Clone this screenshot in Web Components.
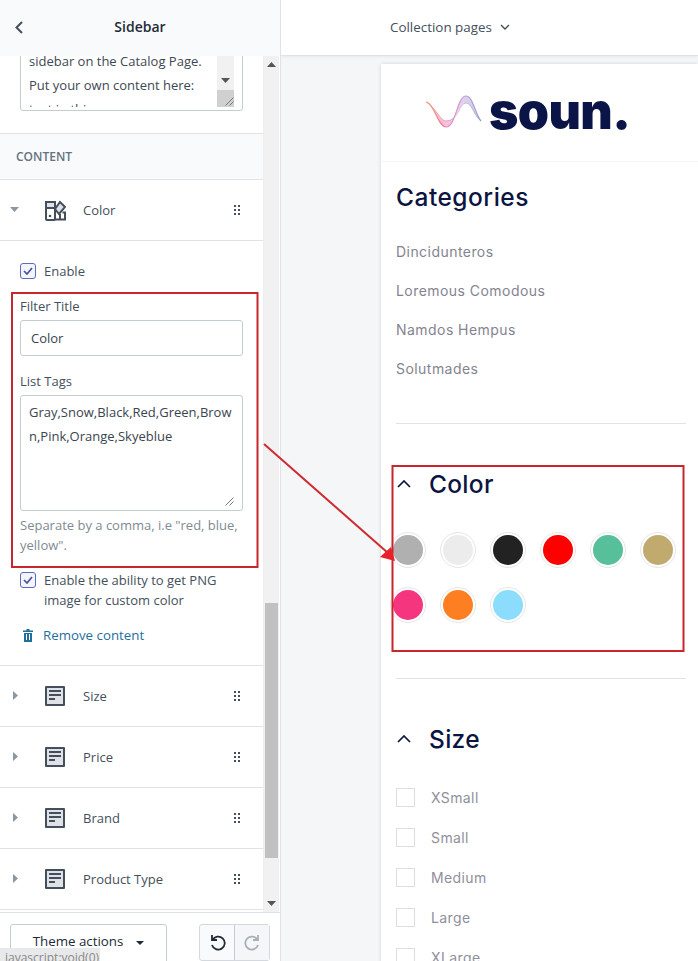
<!DOCTYPE html>
<html>
<head>
<meta charset="utf-8">
<title>Sidebar</title>
<style>
  html, body { margin: 0; height: 100%; overflow: hidden; background: #fff; }
  body { font-family: "Open Sans", "Liberation Sans", sans-serif; }
</style>
</head>
<body>
<editor-app></editor-app>

<script>
const dragDots = `<svg width="8" height="10" viewBox="0 0 8 10" fill="#454f5b">
  <rect x="1" y="0" width="2" height="2"/><rect x="5" y="0" width="2" height="2"/>
  <rect x="1" y="4" width="2" height="2"/><rect x="5" y="4" width="2" height="2"/>
  <rect x="1" y="8" width="2" height="2"/><rect x="5" y="8" width="2" height="2"/>
</svg>`;

const icons = {
  text: `<svg width="20" height="20" viewBox="0 0 20 20">
    <rect x="0" y="0" width="20" height="20" rx="1" fill="#454f5b"/>
    <rect x="2" y="2" width="16" height="16" fill="#dfe3e8"/>
    <rect x="4" y="4" width="12" height="2" fill="#454f5b"/>
    <rect x="4" y="8" width="12" height="2" fill="#454f5b"/>
    <rect x="4" y="12" width="6" height="2" fill="#454f5b"/>
  </svg>`,
  color: `<svg width="21" height="21" viewBox="0 0 21 21" fill="none" stroke="#454f5b" stroke-width="2">
    <path d="M1 2h9v6H1z" fill="#dfe3e8"/>
    <path d="M1 8v11a1 1 0 0 0 1 1h7a1 1 0 0 0 1-1V8"/>
    <path d="M10 9l5-7 5 5-6 7z" fill="#dfe3e8"/>
    <path d="M10 19.500h10v-7h-2.500"/>
    <path d="M15 19v-5" />
    <circle cx="5" cy="16" r="1.300" fill="#454f5b" stroke="none"/>
  </svg>`
};

// one collapsible row of the section list
class SectionRow extends HTMLElement {
  constructor() {
    super();
    this.attachShadow({ mode: 'open' });
  }

  connectedCallback() {
    const open = this.hasAttribute('open');
    const icon = icons[this.getAttribute('icon') || 'text'];
    const caret = open
      ? '<path d="M0 2h9L4.500 7z"/>'
      : '<path d="M3 0l5 4.500L3 9z"/>';
    this.shadowRoot.innerHTML = `
      <style>
        :host {
          display: flex;
          align-items: center;
          height: 60px;
          border-bottom: 1px solid #dfe3e8;
          color: #454f5b;
          font-size: 13px;
        }
        .caret { width: 45px; padding-left: 10px; padding-bottom: 2px; box-sizing: border-box; display: flex; }
        .icon { width: 38px; display: flex; }
        .label { flex: 1; }
        .drag { width: 30px; display: flex; }
      </style>
      <span class="caret"><svg width="10" height="9" viewBox="0 0 10 9" fill="#8c979f">${caret}</svg></span>
      <span class="icon">${icon}</span>
      <span class="label"><slot></slot></span>
      <span class="drag">${dragDots}</span>
    `;
  }
}

class CheckField extends HTMLElement {
  constructor() {
    super();
    this.attachShadow({ mode: 'open' });
    this.shadowRoot.innerHTML = `
      <style>
        :host { display: flex; gap: 8px; font-size: 13px; line-height: 20px; color: #454f5b; }
        .box {
          width: 14px; height: 14px; margin-top: 2px; flex: none;
          border: 1px solid #5c6ac4; border-radius: 3px; background: #f4f5fa;
          display: flex; align-items: center; justify-content: center;
        }
      </style>
      <span class="box"><svg width="10" height="8" viewBox="0 0 10 8" fill="none" stroke="#47539f" stroke-width="1.700"><path d="M1 4l3 3 5-6"/></svg></span>
      <span><slot></slot></span>
    `;
  }
}

class ResizeGrip extends HTMLElement {
  constructor() {
    super();
    this.attachShadow({ mode: 'open' });
    this.shadowRoot.innerHTML = `
      <style>:host { position: absolute; right: 8px; bottom: 4px; display: flex; }</style>
      <svg width="9" height="9" viewBox="0 0 9 9" stroke="#777" fill="none"><path d="M0.500 8.500l8-8M4.500 8.500l4-4"/></svg>
    `;
  }
}

class EditorSidebar extends HTMLElement {
  constructor() {
    super();
    this.attachShadow({ mode: 'open' });
    this.shadowRoot.innerHTML = `
      <style>
        :host {
          display: flex;
          flex-direction: column;
          height: 961px;
          border-right: 1px solid #dfe3e8;
          box-sizing: border-box;
          color: #212b36;
          font-size: 13px;
          position: relative;
          overflow: hidden;
        }
        header {
          height: 56px; flex: none; box-sizing: border-box; padding-bottom: 3px;
          background: #f9fafb;
          display: flex; align-items: center; justify-content: center;
          position: relative;
          font-size: 14px; font-weight: 600; color: #212b36;
        }
        header svg { position: absolute; left: 15px; top: 21px; }
        .middle { flex: 1; min-height: 0; display: flex; }
        .scroll { width: 263px; flex: none; overflow: hidden; }
        .clip {
          height: 78px; box-sizing: border-box; padding: 0 20px 22px;
          display: flex; flex-direction: column; justify-content: flex-end;
          border-bottom: 1px solid #dfe3e8; overflow: hidden;
        }
        .desc {
          flex: none; height: 84px; position: relative; overflow: hidden; box-sizing: border-box;
          border: 1px solid #c4cdd5; border-radius: 3px; padding: 21px 8px 0;
          font-size: 13px; line-height: 24px; color: #3d4852;
        }
        .desc .txt { height: 58px; overflow: hidden; }
        .desc .bar { position: absolute; right: 8px; top: 0; bottom: 3px; width: 17px; background: #f1f1f1; }
        .desc .bar svg { position: absolute; left: 4px; top: 50px; }
        .desc .bar i { position: absolute; left: 0; right: 0; bottom: 0; height: 17px; background: #d0d0d0; }
        .band {
          height: 45px; background: #f9fafb; border-bottom: 1px solid #dfe3e8;
          display: flex; align-items: center; padding-left: 16px;
          font-size: 12px; font-weight: 600; color: #637381;
        }
        .panel { padding: 20px 20px 20px; border-bottom: 1px solid #dfe3e8; color: #454f5b; }
        .label { margin-top: 15px; line-height: 20px; }
        .input {
          margin-top: 4px; height: 36px; box-sizing: border-box; padding-left: 10px;
          border: 1px solid #c4cdd5; border-radius: 3px;
          display: flex; align-items: center; color: #3a444e;
        }
        .area {
          margin-top: 4px; height: 116px; box-sizing: border-box; padding: 4px 8px;
          border: 1px solid #c4cdd5; border-radius: 3px; position: relative;
          line-height: 24px; color: #3a444e; word-break: break-all;
        }
        .help { margin-top: 4px; line-height: 20px; color: #7f8a94; }
        check-field.png { margin-top: 15px; }
        .remove {
          margin-top: 15px; line-height: 20px; color: #1f6f9c; font-size: 13.300px;
          display: flex; align-items: center; gap: 10px; padding-left: 3px;
        }
        .track {
          width: 16px; flex: none; background: #f1f1f1; position: relative;
          border-left: 1px solid #eee; box-sizing: border-box;
        }
        .track svg { position: absolute; left: 3px; }
        .track i { position: absolute; left: 1px; right: 1px; top: 547px; height: 255px; background: #c1c1c1; }
        footer {
          height: 49px; flex: none; box-sizing: border-box; padding: 11px 10px 0;
          border-top: 1px solid #dfe3e8; background: #fff;
          display: flex; justify-content: space-between; overflow: hidden;
        }
        .theme {
          width: 157px; height: 44px; box-sizing: border-box;
          border: 1px solid #c4cdd5; border-radius: 3px;
          display: flex; justify-content: center; gap: 13px; padding-top: 7px;
          color: #212b36; font-size: 13.300px;
        }
        .theme svg { margin-top: 9px; }
        .history {
          width: 71px; height: 37px; box-sizing: border-box; display: flex;
          border: 1px solid #d3d9df; border-radius: 3px; background: #f9fafb;
        }
        .history span { flex: 1; display: flex; align-items: center; justify-content: center; }
        .history span + span { border-left: 1px solid #c4cdd5; background: #f4f6f8; }
        .status {
          position: absolute; left: 0; bottom: 0; width: 100px; height: 13px;
          background: #e8e9ea; color: #888; font-size: 12px; line-height: 20px;
          padding-left: 5px; box-sizing: border-box; overflow: hidden; white-space: nowrap;
        }
      </style>
      <header>
        <svg width="8" height="13" viewBox="0 0 8 13" fill="none" stroke="#454f5b" stroke-width="2"><path d="M7 1L1.500 6.500 7 12"/></svg>
        Sidebar
      </header>
      <div class="middle">
        <div class="scroll">
          <div class="clip">
            <div class="desc">
              <div class="txt">sidebar on the Catalog Page.<br>Put your own content here:<br>text in this area goes</div>
              <span class="bar">
                <svg width="9" height="5" viewBox="0 0 9 5" fill="#555"><path d="M0 0h9L4.500 5z"/></svg>
                <i></i>
              </span>
              <resize-grip></resize-grip>
            </div>
          </div>
          <div class="band">CONTENT</div>
          <section-row open icon="color">Color</section-row>
          <div class="panel">
            <check-field>Enable</check-field>
            <div class="label">Filter Title</div>
            <div class="input">Color</div>
            <div class="label">List Tags</div>
            <div class="area">Gray,Snow,Black,Red,Green,Brown,Pink,Orange,Skyeblue<resize-grip></resize-grip></div>
            <div class="help">Separate by a comma, i.e "red, blue, yellow".</div>
            <check-field class="png">Enable the ability to get PNG image for custom color</check-field>
            <div class="remove">
              <svg width="10" height="13" viewBox="0 0 10 13" fill="#1f6f9c"><path fill-rule="evenodd" d="M3.500 0h3v1.500H10V3H0V1.500h3.500zM1 4h8v9H1zM3 5v6h1V5zM6 5v6h1V5z"/></svg>
              Remove content
            </div>
          </div>
          <section-row>Size</section-row>
          <section-row>Price</section-row>
          <section-row>Brand</section-row>
          <section-row>Product Type</section-row>
        </div>
        <div class="track">
          <svg style="top:6px" width="9" height="5" viewBox="0 0 9 5" fill="#555"><path d="M0 5h9L4.500 0z"/></svg>
          <i></i>
          <svg style="bottom:6px" width="9" height="5" viewBox="0 0 9 5" fill="#555"><path d="M0 0h9L4.500 5z"/></svg>
        </div>
      </div>
      <footer>
        <div class="theme">Theme actions <svg width="8" height="4" viewBox="0 0 8 4" fill="#212b36"><path d="M0 0h8L4 4z"/></svg></div>
        <div class="history">
          <span><svg width="17" height="17" viewBox="0 0 17 17" fill="none" stroke="#212b36" stroke-width="1.800"><path d="M3 1v5h5"/><path d="M3.500 6A6.500 6.500 0 1 1 3 11"/></svg></span>
          <span><svg width="17" height="17" viewBox="0 0 17 17" fill="none" stroke="#a8b0b8" stroke-width="1.800"><path d="M14 1v5H9"/><path d="M13.500 6A6.500 6.500 0 1 0 14 11"/></svg></span>
        </div>
      </footer>
      <div class="status">javascript:void(0)</div>
    `;
  }
}

// swatch of the colour filter
class ColorDot extends HTMLElement {
  constructor() {
    super();
    this.attachShadow({ mode: 'open' });
  }

  connectedCallback() {
    this.shadowRoot.innerHTML = `
      <style>
        :host {
          display: block; width: 36px; height: 36px; box-sizing: border-box;
          border: 1px solid #e6e6e6; border-radius: 50%; padding: 2px;
        }
        div { width: 30px; height: 30px; border-radius: 50%; background: ${this.getAttribute('color')}; }
      </style>
      <div></div>
    `;
  }
}

class FilterHeading extends HTMLElement {
  constructor() {
    super();
    this.attachShadow({ mode: 'open' });
    this.shadowRoot.innerHTML = `
      <style>
        :host {
          display: flex; align-items: center; gap: 18px;
          font-family: Inter, "Liberation Sans", sans-serif;
          font-size: 24.500px; font-weight: 500; letter-spacing: .3px; color: #0c1442; line-height: 36px;
        }
        svg { margin-left: 1px; }
      </style>
      <svg width="14" height="8" viewBox="0 0 14 8" fill="none" stroke="#0c1442" stroke-width="1.700"><path d="M1 7l6-6 6 6"/></svg>
      <span><slot></slot></span>
    `;
  }
}

class SizeOption extends HTMLElement {
  constructor() {
    super();
    this.attachShadow({ mode: 'open' });
    this.shadowRoot.innerHTML = `
      <style>
        :host { display: flex; align-items: center; gap: 16px; height: 40px; font-size: 14px; letter-spacing: .4px; color: #8f8f9c; }
        i { width: 17px; height: 17px; border: 1px solid #dedede; display: block; }
      </style>
      <i></i><span><slot></slot></span>
    `;
  }
}

class ThemePreview extends HTMLElement {
  constructor() {
    super();
    this.attachShadow({ mode: 'open' });
    this.shadowRoot.innerHTML = `
      <style>
        :host {
          display: flex; flex-direction: column; height: 961px; overflow: hidden;
          background: #f4f6f8;
          font-family: Inter, "Liberation Sans", sans-serif;
        }
        .top {
          height: 56px; flex: none; box-sizing: border-box; background: #fff; padding-bottom: 2px;
          border-bottom: 1px solid #dfe3e8; box-shadow: 0 1px 3px rgba(0,0,0,.06);
          display: flex; align-items: center; gap: 8px; padding-left: 109px;
          font-family: "Open Sans", "Liberation Sans", sans-serif;
          font-size: 13.400px; color: #454f5b;
        }
        .card {
          margin: 8px 0 0 100px; flex: 1; background: #fff;
          box-shadow: 0 0 4px rgba(0,0,0,.14);
        }
        .logo {
          height: 98px; box-sizing: border-box; border-bottom: 1px solid #f6f6f6;
          display: flex; align-items: center; gap: 7px; padding: 0 0 4px 45px;
        }
        .logo b {
          font-family: Inter, sans-serif; font-size: 50px; font-weight: 900;
          color: #0a1446; letter-spacing: -.6px; line-height: 60px;
        }
        .body { padding: 17px 12px 0 15px; }
        h2 { margin: 0; font-size: 24.500px; font-weight: 500; letter-spacing: .5px; color: #0c1442; line-height: 36px; }
        .cats { margin-top: 26px; display: flex; flex-direction: column; gap: 17px; font-size: 14px; letter-spacing: .45px; line-height: 22px; color: #84848f; }
        hr { border: 0; border-top: 1px solid #e3e3e3; margin: 0; }
        .cats + hr { margin-top: 43px; }
        filter-heading.c { margin-top: 42px; }
        .dots { margin-top: 30px; display: grid; grid-template-columns: repeat(6, 36px); gap: 19px 14px; margin-left: -6px; }
        .dots + hr { margin-top: 55px; }
        filter-heading.s { margin-top: 42px; }
        .sizes { margin-top: 20px; }
      </style>
      <div class="top">Collection pages
        <svg width="10" height="6" viewBox="0 0 10 6" fill="none" stroke="#454f5b" stroke-width="1.400"><path d="M1 1l4 4 4-4"/></svg>
      </div>
      <div class="card">
        <div class="logo">
          <svg width="56" height="34" viewBox="0 0 56 34" fill="none">
            <defs>
              <linearGradient id="wave" x1="0" y1="0" x2="1" y2="0">
                <stop offset="0" stop-color="#e8a070"/>
                <stop offset=".3" stop-color="#f07ea6"/>
                <stop offset=".65" stop-color="#c9a2de"/>
                <stop offset="1" stop-color="#8d9cc4"/>
              </linearGradient>
            </defs>
            <path d="M0 8C8 9 12 33 20 33C30 33 31 2 40 2C47 2 49 20 55 27C48 22 46 9 40 9C33 9 31 27 20 27C14 27 9 12 0 8z" fill="url(#wave)" opacity=".5"/>
            <path d="M0 8C8 9 12 33 20 33C30 33 31 2 40 2C47 2 49 20 55 27" stroke="url(#wave)" stroke-width="1.200"/>
            <path d="M0 8C9 12 14 27 20 27C33 27 33 9 40 9C46 9 48 22 55 27" stroke="url(#wave)" stroke-width="1" opacity=".7"/>
          </svg>
          <b>soun.</b>
        </div>
        <div class="body">
          <h2>Categories</h2>
          <div class="cats">
            <span>Dincidunteros</span>
            <span>Loremous Comodous</span>
            <span>Namdos Hempus</span>
            <span>Solutmades</span>
          </div>
          <hr>
          <filter-heading class="c">Color</filter-heading>
          <div class="dots">
            <color-dot color="#b0b0b0"></color-dot>
            <color-dot color="#ececec"></color-dot>
            <color-dot color="#222222"></color-dot>
            <color-dot color="#fe0000"></color-dot>
            <color-dot color="#57c09b"></color-dot>
            <color-dot color="#c0aa6e"></color-dot>
            <color-dot color="#f5367f"></color-dot>
            <color-dot color="#fe7f22"></color-dot>
            <color-dot color="#8cdcfd"></color-dot>
          </div>
          <hr>
          <filter-heading class="s">Size</filter-heading>
          <div class="sizes">
            <size-option>XSmall</size-option>
            <size-option>Small</size-option>
            <size-option>Medium</size-option>
            <size-option>Large</size-option>
            <size-option>XLarge</size-option>
          </div>
        </div>
      </div>
    `;
  }
}

// the red marks drawn over the screenshot
class AnnotationLayer extends HTMLElement {
  constructor() {
    super();
    this.attachShadow({ mode: 'open' });
    this.shadowRoot.innerHTML = `
      <style>:host { position: absolute; left: 0; top: 0; width: 698px; height: 961px; pointer-events: none; display: block; }</style>
      <svg width="698" height="961" viewBox="0 0 698 961" fill="none">
        <rect x="12" y="293" width="245.500" height="274" stroke="#c9252d" stroke-width="2"/>
        <rect x="392.500" y="466" width="291" height="185" stroke="#c9252d" stroke-width="2"/>
        <path d="M264 444L388 553" stroke="#cf2a30" stroke-width="2"/>
        <path d="M395 561L380 557 391 547z" fill="#e8202a"/>
      </svg>
    `;
  }
}

class EditorApp extends HTMLElement {
  constructor() {
    super();
    this.attachShadow({ mode: 'open' });
    this.shadowRoot.innerHTML = `
      <style>
        :host { display: grid; grid-template-columns: 281px 417px; width: 698px; height: 961px; position: relative; overflow: hidden; }
      </style>
      <editor-sidebar></editor-sidebar>
      <theme-preview></theme-preview>
      <annotation-layer></annotation-layer>
    `;
  }
}

customElements.define('section-row', SectionRow);
customElements.define('check-field', CheckField);
customElements.define('resize-grip', ResizeGrip);
customElements.define('editor-sidebar', EditorSidebar);
customElements.define('color-dot', ColorDot);
customElements.define('filter-heading', FilterHeading);
customElements.define('size-option', SizeOption);
customElements.define('theme-preview', ThemePreview);
customElements.define('annotation-layer', AnnotationLayer);
customElements.define('editor-app', EditorApp);
</script>
</body>
</html>
